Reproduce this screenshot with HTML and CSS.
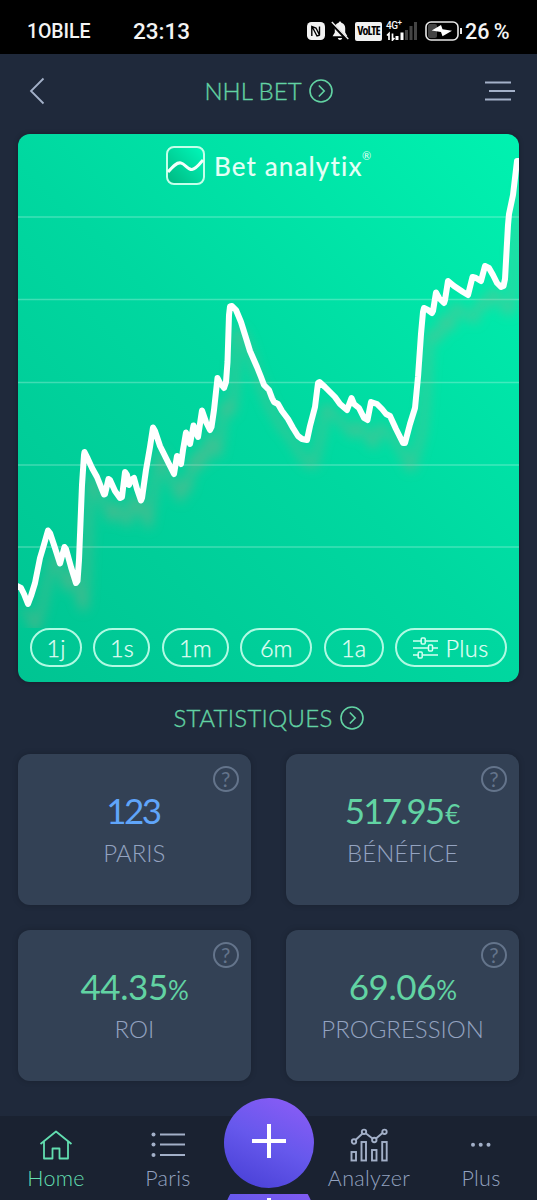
FILE: index.html
```
<!DOCTYPE html>
<html lang="fr">
<head>
    <meta charset="utf-8">
    <title>Bet analytix</title>
    <link rel="stylesheet" href="styles.css">
</head>
<body>
    <div class="status-bar">
        <div class="carrier">1OBILE</div>
        <div class="clock">23:13</div>
        <div class="status-icons">
            <svg class="nfc" width="18" height="18" viewBox="0 0 18 18">
                <rect width="18" height="18" rx="4.5" fill="#f2f2f2"/>
                <path d="M4.800 14V4.500L9 6l3.500 7V4.500M5 4.500l5 9.500 3-1" fill="none" stroke="#000" stroke-width="1.4"/>
            </svg>
            <svg class="bell" width="18" height="20" viewBox="0 0 18 20">
                <path d="M9 .5c.9 0 1.300.6 1.300 1.300 2.600.6 3.900 2.700 3.900 5.200v4.500l2.200 3.700H1.600l2.200-3.700V7c0-2.500 1.300-4.600 3.900-5.200C7.700 1.100 8.100.5 9 .5zM6.800 17h4.400c-.5 2.600-3.900 2.600-4.400 0z" fill="#f2f2f2"/>
                <path d="M0 1.500l16 17" stroke="#000" stroke-width="3.200"/>
                <path d="M.8 1l16.500 17" stroke="#f2f2f2" stroke-width="1.300"/>
            </svg>
            <div class="volte">VoLTE</div>
            <div class="network">
                <div class="gen">4G<sup>+</sup></div>
                <svg width="32" height="20" viewBox="0 0 32 20">
                    <path d="M1 14.500l2-2V19M6.500 12.500V19l2-2" fill="none" stroke="#fff" stroke-width="1.700"/>
                    <path d="M11 19v-4M16 19v-7.500" stroke="#fff" stroke-width="3"/>
                    <path d="M20.500 19V9M25 19V5M29.500 19V1" stroke="#444" stroke-width="3"/>
                </svg>
            </div>
            <svg class="battery" width="38" height="20" viewBox="0 0 38 20">
                <rect x="3" y="3" width="9" height="14" rx="2" fill="#444"/>
                <rect x="1" y="1" width="32" height="18" rx="5" fill="none" stroke="#e8e8e8" stroke-width="1.600"/>
                <path d="M36 7v6" stroke="#e8e8e8" stroke-width="2"/>
                <path d="M6.700 9.500L16 4l1.500 4.200L27 9.700l-9.500 5.600-1.500-4.200z" fill="#fff"/>
            </svg>
            <div class="percent">26 %</div>
        </div>
    </div>

    <header class="top-bar">
        <svg width="16" height="28" viewBox="0 0 16 28" fill="none" stroke="#a3b0c8" stroke-width="1.800">
            <path d="M14.500 1.500L2 14l12.500 12.500"/>
        </svg>
        <h1 class="title title-bankroll"><span>NHL BET</span>
            <svg width="24" height="24" viewBox="0 0 24 24" fill="none" stroke="#62d3a3" stroke-width="1.600">
                <circle cx="12" cy="12" r="11"/>
                <path d="M9.800 6.500l5.400 5.500-5.400 5.500"/>
            </svg>
        </h1>
        <svg width="30" height="20" viewBox="0 0 30 20" stroke="#a3b0c8" stroke-width="1.800">
            <path d="M0 1.500h26M4 10h26M0 18.500h26"/>
        </svg>
    </header>

    <section class="chart-card">
        <svg class="chart" width="501" height="494" viewBox="18 134 501 494">
            <defs>
                <filter id="lineShadow" filterUnits="userSpaceOnUse" x="0" y="120" width="560" height="540">
                    <feDropShadow dx="7" dy="25" stdDeviation="6" flood-color="#b0a080" flood-opacity=".4"/>
                </filter>
            </defs>
            <path class="grid-line" d="M18 217h501M18 299.500h501M18 382.500h501M18 465h501M18 547h501"/>
            <polyline class="profit-line" filter="url(#lineShadow)" points="17,586 21,588 24,594 28,604 31,596 35,583 37,573 40,558 43,548 48,530.500 50,533 55,548 60,563.500 64.500,547 66,549 71,567 76,583 77.500,581 79,560 82,485 84,455 84.500,452 87,457 92,468 97,477 101,487 104,494.500 105,494 108.500,479 110,480 115,491 120,498 122,497 125,472 127,475 129,485 131,480 134,478 137,489 141,500.500 142,498 146,470 150,447 153,427.500 155,431 160,446 166,458 171,468 174,474 177,456 181,464 183,450 186,432.500 190,444 193.500,425.500 198,437 202,410.500 206,422 210,430 211.500,427 214,410 217.500,378 220,383 224,388 226,382 227.500,362 229,315 230,306.500 232,306 236,310 241,322 246,338 250,351 257,367 261,377 264,385 269,390 272,398 274,402 278,404 282,411 288,419 293,428 298,436 302,439 307,440 310,426 315,407 318,383 319.500,382 325,387 335,397 340,404 347,410 351.500,398 354,404 359,408 364,418 367.500,420 371,402 377,404 382,409 386,414 390,416 396,429 403,443 405,443 410,424 415,408 418,377 421,334 423,312 424,308 428,310 432,313 433,311 436,292.500 439,298 444,303 445,300 448,281 454,286 463,292 468,295 472.500,277 476,278 481,281 485,266 489,268 493,275 497,283 501,287 503.500,286 505,279 508,225 509,214 513,195 517,161 521,161"/>
        </svg>
        <div class="logo">
            <svg width="39" height="39" viewBox="0 0 39 39">
                <defs>
                    <linearGradient id="logoFill" x1="0" y1="1" x2="1" y2="0">
                        <stop offset=".1" stop-color="#00bd86"/>
                        <stop offset=".9" stop-color="#00f3b5"/>
                    </linearGradient>
                </defs>
                <rect x="1" y="1" width="37" height="37" rx="7" fill="url(#logoFill)" stroke="#c4ffea" stroke-width="2"/>
                <path d="M2 26C7 20 11 16 15 17c4 .8 7 7 11 6.500 4-.5 8-6 11-9.500" fill="none" stroke="#f3fffb" stroke-width="3"/>
            </svg>
            <span class="logo-name">Bet analytix</span><sup class="logo-mark">®</sup>
        </div>
        <div class="periods">
            <button class="pill pill-1j">1j</button>
            <button class="pill pill-1s">1s</button>
            <button class="pill pill-1m">1m</button>
            <button class="pill pill-6m">6m</button>
            <button class="pill pill-1a">1a</button>
            <button class="pill pill-more">
                <svg width="25" height="22" viewBox="0 0 25 22" fill="none" stroke="#d5fff2" stroke-width="1.500">
                    <path d="M0 4h8M13 4h12M0 11h15M20 11h5M0 18h5M10 18h15"/>
                    <rect x="8.200" y="1" width="4" height="6" rx="1"/>
                    <rect x="15.500" y="8" width="4" height="6" rx="1"/>
                    <rect x="5.200" y="15" width="4" height="6" rx="1"/>
                </svg>
                <span>Plus</span>
            </button>
        </div>
    </section>

    <h2 class="title title-stats"><span>STATISTIQUES</span>
        <svg width="24" height="24" viewBox="0 0 24 24" fill="none" stroke="#62d3a3" stroke-width="1.600">
            <circle cx="12" cy="12" r="11"/>
            <path d="M9.800 6.500l5.400 5.500-5.400 5.500"/>
        </svg>
    </h2>

    <section class="stats">
        <div class="stat">
            <span class="help">?</span>
            <div class="value bets">123</div>
            <div class="label">PARIS</div>
        </div>
        <div class="stat">
            <span class="help">?</span>
            <div class="value profit">517.95<small>€</small></div>
            <div class="label">BÉNÉFICE</div>
        </div>
        <div class="stat">
            <span class="help">?</span>
            <div class="value">44.35<small>%</small></div>
            <div class="label">ROI</div>
        </div>
        <div class="stat">
            <span class="help">?</span>
            <div class="value">69.06<small>%</small></div>
            <div class="label">PROGRESSION</div>
        </div>
    </section>

    <nav class="bottom-nav">
        <a class="nav-item active">
            <svg width="34" height="34" viewBox="0 0 34 34" fill="none" stroke="#62deb0" stroke-width="1.800">
                <path d="M1.500 16L17 3.500 32.500 16M5 13.500V30.500h8.500V20.500h7V30.500H29V13.500" stroke-linejoin="round"/>
            </svg>
            <span>Home</span>
        </a>
        <a class="nav-item">
            <svg width="34" height="34" viewBox="0 0 34 34" fill="#a3b0c8" stroke="#a3b0c8" stroke-width="1.800">
                <path d="M9 6.500h25M9 16.500h25M9 27h25"/>
                <g stroke="none"><circle cx="2.500" cy="6.500" r="2"/><circle cx="2.500" cy="16.500" r="2"/><circle cx="2.500" cy="27" r="2"/></g>
            </svg>
            <span>Paris</span>
        </a>
        <a class="nav-item add">
            <div class="fab">
                <svg width="34" height="34" viewBox="0 0 34 34" stroke="#fff" stroke-width="4">
                    <path d="M0 17h34M17 0v34"/>
                </svg>
            </div>
            <div class="fab-peek">
                <div class="fab">
                    <svg width="34" height="34" viewBox="0 0 34 34" stroke="#fff" stroke-width="4">
                        <path d="M0 17h34M17 0v34"/>
                    </svg>
                </div>
            </div>
        </a>
        <a class="nav-item">
            <svg width="38" height="34" viewBox="0 0 38 34" fill="none" stroke="#a3b0c8" stroke-width="1.900">
                <rect x="1.500" y="24" width="4.500" height="8.500"/>
                <rect x="11.500" y="14" width="4.500" height="18.500"/>
                <rect x="22" y="22" width="4.500" height="10.500"/>
                <rect x="32.200" y="14" width="4.500" height="18.500"/>
                <path d="M5.500 12l7-6.500M16 5.500l6.500 5M26 10.500l6.500-5.500"/>
                <circle cx="4" cy="13.500" r="2.200"/><circle cx="14" cy="3.800" r="2.200"/><circle cx="24.300" cy="12" r="2.200"/><circle cx="34.500" cy="3.800" r="2.200"/>
            </svg>
            <span>Analyzer</span>
        </a>
        <a class="nav-item">
            <svg width="34" height="34" viewBox="0 0 34 34" fill="#a3b0c8">
                <circle cx="9" cy="16.800" r="2"/><circle cx="16.700" cy="16.800" r="2"/><circle cx="24.500" cy="16.800" r="2"/>
            </svg>
            <span>Plus</span>
        </a>
    </nav>
</body>
</html>
```
FILE: styles.css
```
* {
    box-sizing: border-box;
}
body {
    margin: 0;
    height: 1200px;
    display: flex;
    flex-direction: column;
    overflow: hidden;
    background: #1f293b;
    color: #a3b0c8;
    font-family: Lato, "Open Sans", sans-serif;
    font-weight: 300;
}

/* phone status bar */
.status-bar {
    height: 54px;
    background: #000;
    color: #f4f4f4;
    display: flex;
    align-items: center;
    padding: 8px 28px 0 27px;
    font-family: Roboto, sans-serif;
    font-weight: 500;
}
.carrier {
    width: 63px;
    font-size: 19.5px;
    letter-spacing: -0.1px;
}
.clock {
    margin-left: 43px;
    width: 58px;
    font-size: 22.5px;
    white-space: nowrap;
}
.status-icons {
    margin-left: auto;
    display: flex;
    align-items: center;
}
.bell {
    margin-left: 6px;
}
.volte {
    margin-left: 6px;
    width: 27px;
    height: 19px;
    border-radius: 2px;
    background: #f2f2f2;
    color: #000;
    font-family: "Open Sans", sans-serif;
    font-stretch: condensed;
    font-size: 12px;
    font-weight: 700;
    letter-spacing: -0.9px;
    line-height: 18px;
    text-align: center;
}
.network {
    margin-left: 4px;
    height: 20px;
    position: relative;
}
.network svg {
    display: block;
}
.gen {
    position: absolute;
    top: 0;
    left: 0;
    font-size: 10px;
    line-height: 10px;
    letter-spacing: -0.5px;
}
.gen sup {
    font-size: 8px;
    line-height: 0;
}
.battery {
    margin-left: 7px;
}
.percent {
    margin-left: 2px;
    width: 44px;
    font-size: 21.5px;
    word-spacing: -1px;
    white-space: nowrap;
}

/* header */
.top-bar {
    height: 80px;
    padding: 0 22px 6px 29px;
    display: flex;
    align-items: center;
    justify-content: space-between;
}
.title {
    margin: 0;
    display: flex;
    align-items: center;
    justify-content: center;
    gap: 7px;
    color: #62d3a3;
    font-size: 24px;
    font-weight: 300;
    line-height: 30px;
    -webkit-text-stroke: .35px #62d3a3;
}
.title-bankroll {
    margin-left: 7px;
}
.title-stats {
    height: 72px;
    letter-spacing: .3px;
}

/* chart */
.chart-card {
    position: relative;
    height: 548px;
    margin: 0 18px;
    padding: 12px;
    border-radius: 12px;
    overflow: hidden;
    background: linear-gradient(45deg, #00c492 0%, #00d8a0 50%, #00f2b0 100%);
    box-shadow: 0 0 5px rgba(0, 0, 0, .3);
    display: flex;
    flex-direction: column;
    justify-content: space-between;
}
.chart {
    position: absolute;
    top: 0;
    left: 0;
}
.grid-line {
    stroke: #fff;
    stroke-opacity: .25;
    stroke-width: 1.5;
}
.profit-line {
    fill: none;
    stroke: #fff;
    stroke-width: 6;
    stroke-linejoin: round;
    stroke-linecap: round;
}
.logo {
    position: relative;
    display: flex;
    align-items: center;
    margin-left: 136px;
    height: 39px;
    color: #e4fff6;
}
.logo-name {
    margin-left: 9px;
    width: 148px;
    font-size: 26px;
    font-weight: 500;
    letter-spacing: 1.1px;
    white-space: nowrap;
}
.logo-mark {
    margin-top: -20px;
    font-size: 11px;
    font-weight: 400;
}
.periods {
    position: relative;
    display: flex;
    justify-content: space-between;
    margin-bottom: 3px;
}
.pill {
    display: flex;
    align-items: center;
    justify-content: center;
    gap: 7px;
    height: 39px;
    padding: 0;
    border: 2px solid #b0fae3;
    border-radius: 20px;
    background: none;
    color: #e4fff6;
    font-family: inherit;
    font-size: 23.5px;
    font-weight: 300;
    -webkit-text-stroke: .25px #e4fff6;
}
.pill-1j { width: 52px; }
.pill-1s { width: 57px; }
.pill-1m { width: 67px; }
.pill-6m { width: 72px; }
.pill-1a { width: 60px; }
.pill-more {
    width: 112px;
    letter-spacing: .4px;
}

/* statistics */
.stats {
    display: grid;
    grid-template-columns: 1fr 1fr;
    grid-auto-rows: 151px;
    gap: 24.5px 35.5px;
    padding: 0 18px;
}
.stat {
    position: relative;
    padding-top: 36px;
    border-radius: 12px;
    background: #334155;
    box-shadow: 0 0 6px rgba(0, 0, 0, .2);
    text-align: center;
}
.help {
    position: absolute;
    top: 12px;
    right: 12px;
    width: 26px;
    height: 26px;
    border: 2px solid #64748b;
    border-radius: 50%;
    color: #64748b;
    font-size: 21px;
    font-weight: 400;
    line-height: 22px;
}
.value {
    height: 42px;
    color: #62d3a3;
    font-size: 35px;
    font-weight: 400;
    line-height: 41px;
    letter-spacing: -0.4px;
}
.value small {
    font-size: 26px;
    line-height: 0;
}
.value.bets {
    padding-right: 3px;
    color: #60a5fa;
    letter-spacing: -2.6px;
}
.value.profit {
    padding-right: 2px;
    letter-spacing: -1.9px;
}
.profit small {
    margin-left: 2px;
}
.label {
    margin-top: 6px;
    color: #94a3c0;
    font-size: 24px;
    line-height: 30px;
}

/* bottom navigation */
.bottom-nav {
    display: grid;
    grid-template-columns: 1fr 1fr 89px 1fr 1fr;
    height: 84px;
    margin-top: auto;
    background: #1a2231;
}
.nav-item {
    display: flex;
    flex-direction: column;
    align-items: center;
    padding-top: 12px;
    color: #94a3c0;
    font-size: 21.5px;
    line-height: 32px;
    letter-spacing: .3px;
}
.active {
    color: #62deb0;
}
.add {
    padding: 0;
    margin-top: -18px;
}
.fab {
    flex: none;
    width: 90px;
    height: 90px;
    padding-bottom: 5px;
    border-radius: 50%;
    background: linear-gradient(25deg, #4840d6 5%, #6658ec 50%, #8b5cf6 95%);
    display: flex;
    align-items: center;
    justify-content: center;
}
.fab-peek {
    width: 90px;
    height: 6px;
    margin-top: 6px;
    overflow: hidden;
}
.fab-peek .fab {
    margin-top: -22px;
}
```
